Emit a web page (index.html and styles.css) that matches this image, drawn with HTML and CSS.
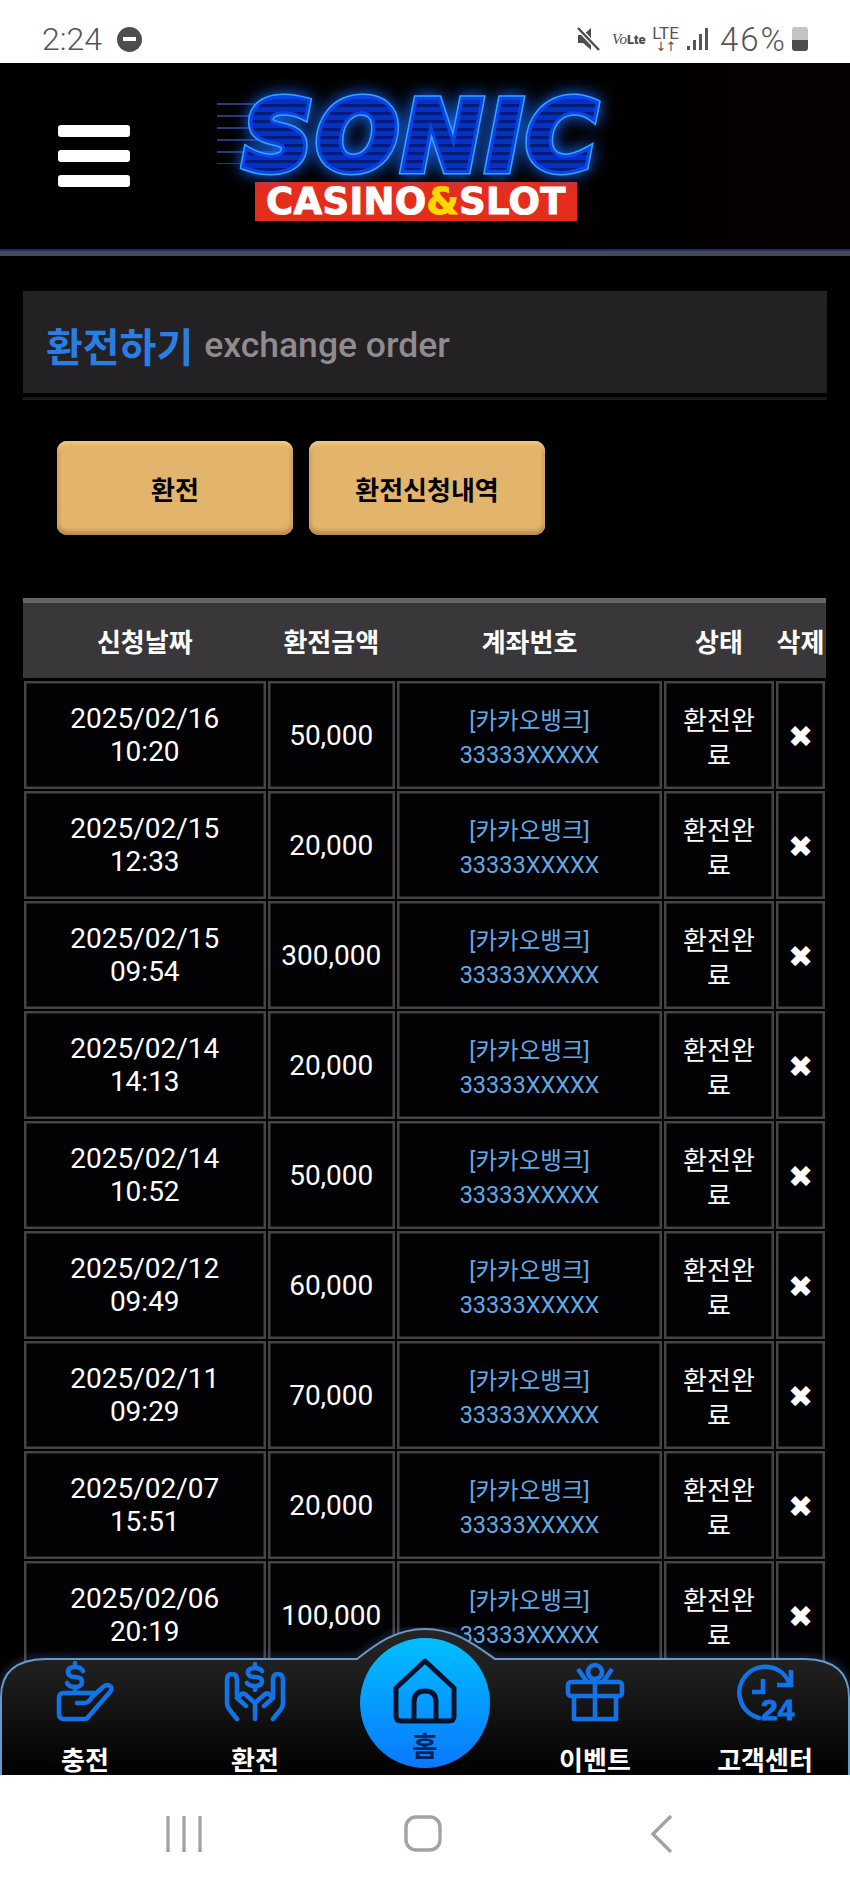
FILE: index.html

```html
<!DOCTYPE html>
<html lang="ko">
<head>
    <meta charset="UTF-8">
    <meta name="viewport" content="width=device-width, initial-scale=1.0">
    <title>환전하기</title>
    <link rel="stylesheet" href="styles.css">
</head>
<body>
<div class="page">
    <div class="status-bar">
        <div class="status-left">
            <span class="clock">2:24</span>
            <span class="dnd"><span></span></span>
        </div>
        <div class="status-right">
            <svg class="mute" width="24" height="24" viewBox="0 0 24 24">
                <path d="M2 8h5l8-7v22l-8-7H2z" fill="#4d4d4d"/>
                <path d="M2 1l21 22" stroke="#fff" stroke-width="5"/>
                <path d="M2 1l21 22" stroke="#4d4d4d" stroke-width="2.4"/>
            </svg>
            <span class="volte"><i>Vo</i><b>Lte</b></span>
            <span class="lte">LTE<small>↓↑</small></span>
            <svg class="signal" width="22" height="24" viewBox="0 0 22 24">
                <rect x="0" y="19" width="3" height="4" fill="#555"/>
                <rect x="6" y="13" width="3" height="10" fill="#555"/>
                <rect x="12" y="7" width="3" height="16" fill="#555"/>
                <rect x="18" y="1" width="3" height="22" fill="#555"/>
            </svg>
            <span class="percent">46%</span>
            <span class="battery"></span>
        </div>
    </div>

    <header class="top">
        <div class="burger"><span></span><span></span><span></span></div>
        <div class="logo">
            <div class="speed"></div>
            <div class="sonic">SONIC</div>
            <div class="casino">CASINO<em>&amp;</em>SLOT</div>
        </div>
    </header>

    <main class="main">
        <div class="title-box">
            <h2>환전하기</h2>
            <span>exchange order</span>
        </div>
        <div class="title-line"></div>
        <div class="tabs">
            <a href="#" class="tab">환전</a>
            <a href="#" class="tab">환전신청내역</a>
        </div>
        <table class="list">
            <colgroup>
                <col class="c-date"><col class="c-money"><col class="c-bank"><col class="c-state"><col class="c-del">
            </colgroup>
            <thead>
                <tr><th>신청날짜</th><th>환전금액</th><th>계좌번호</th><th>상태</th><th>삭제</th></tr>
            </thead>
            <tbody>
                <tr><td>2025/02/16<br>10:20</td><td>50,000</td><td class="bank">[카카오뱅크]<br>33333XXXXX</td><td class="state">환전완료</td><td class="del">✖</td></tr>
                <tr><td>2025/02/15<br>12:33</td><td>20,000</td><td class="bank">[카카오뱅크]<br>33333XXXXX</td><td class="state">환전완료</td><td class="del">✖</td></tr>
                <tr><td>2025/02/15<br>09:54</td><td>300,000</td><td class="bank">[카카오뱅크]<br>33333XXXXX</td><td class="state">환전완료</td><td class="del">✖</td></tr>
                <tr><td>2025/02/14<br>14:13</td><td>20,000</td><td class="bank">[카카오뱅크]<br>33333XXXXX</td><td class="state">환전완료</td><td class="del">✖</td></tr>
                <tr><td>2025/02/14<br>10:52</td><td>50,000</td><td class="bank">[카카오뱅크]<br>33333XXXXX</td><td class="state">환전완료</td><td class="del">✖</td></tr>
                <tr><td>2025/02/12<br>09:49</td><td>60,000</td><td class="bank">[카카오뱅크]<br>33333XXXXX</td><td class="state">환전완료</td><td class="del">✖</td></tr>
                <tr><td>2025/02/11<br>09:29</td><td>70,000</td><td class="bank">[카카오뱅크]<br>33333XXXXX</td><td class="state">환전완료</td><td class="del">✖</td></tr>
                <tr><td>2025/02/07<br>15:51</td><td>20,000</td><td class="bank">[카카오뱅크]<br>33333XXXXX</td><td class="state">환전완료</td><td class="del">✖</td></tr>
                <tr><td>2025/02/06<br>20:19</td><td>100,000</td><td class="bank">[카카오뱅크]<br>33333XXXXX</td><td class="state">환전완료</td><td class="del">✖</td></tr>
            </tbody>
        </table>
    </main>

    <div class="sys-bar">
        <svg width="36" height="36" viewBox="0 0 36 36"><path d="M2 0v36M18 0v36M34 0v36" stroke="#a3a3a3" stroke-width="3.4"/></svg>
        <svg width="38" height="37" viewBox="0 0 38 37"><rect x="2" y="2" width="34" height="33" rx="10" fill="none" stroke="#a3a3a3" stroke-width="3.4"/></svg>
        <svg width="22" height="38" viewBox="0 0 22 38"><path d="M20 1L2 19l18 18" fill="none" stroke="#a3a3a3" stroke-width="3.4"/></svg>
    </div>

    <nav class="bottom-nav">
        <svg class="nav-bg" width="850" height="148" viewBox="0 0 850 148">
            <defs>
                <linearGradient id="navFill" x1="0" y1="0" x2="0" y2="1">
                    <stop offset="0" stop-color="#262626"/>
                    <stop offset="0.35" stop-color="#1c1c1c"/>
                    <stop offset="1" stop-color="#000"/>
                </linearGradient>
                <filter id="navGlow" x="-5%" y="-20%" width="110%" height="140%">
                    <feGaussianBlur stdDeviation="4"/>
                </filter>
            </defs>
            <path d="M1 148V70Q1 33 45 32H357C375 18 395 2 425 2S475 18 495 32H805Q849 33 849 70V148" fill="none" stroke="#4f86c6" stroke-width="4" opacity=".5" filter="url(#navGlow)"/>
            <path d="M1 148V70Q1 33 45 32H357C375 18 395 2 425 2S475 18 495 32H805Q849 33 849 70V148Z" fill="url(#navFill)"/>
            <path d="M1 148V70Q1 33 45 32H357C375 18 395 2 425 2S475 18 495 32H805Q849 33 849 70V148" fill="none" stroke="#6c97c6" stroke-width="2"/>
        </svg>
        <a href="#" class="nav-item">
            <svg width="90" height="70" viewBox="0 0 90 70" fill="none" stroke="#1173e6" stroke-width="4.6" stroke-linecap="round" stroke-linejoin="round">
                <path d="M43 14Q41 10 35 10Q28 10 28 15Q28 20 35 20Q42 20 42 25Q42 30 35 30Q29 30 27 26M35 6V10M35 30V36"/>
                <path d="M55 36H24Q19 36 19 41V57Q19 62 24 62H45Q47 62 49 59L70 35Q73 31 70 29Q67 27 63 30L52 40Q49 46 44 46H37"/>
            </svg>
            <span>충전</span>
        </a>
        <a href="#" class="nav-item">
            <svg width="90" height="70" viewBox="0 0 90 70" fill="none" stroke="#1173e6" stroke-width="4.6" stroke-linecap="round" stroke-linejoin="round">
                <path d="M52 14Q50 11 45 11Q38 11 38 15.500Q38 20 45 20Q52 20 52 24.500Q52 29 45 29Q39 29 37 26M45 7V11M45 29V33"/>
                <path d="M27 62L19 52Q17 49 17 46V23Q17 17 22 17Q27 17 27 23V38M63 38V23Q63 17 68 17Q73 17 73 23V46Q73 49 71 52L63 62"/>
                <path d="M45 62V46L36 38Q33 35 30 38L27 41L36 49M45 46L54 38Q57 35 60 38L63 41L54 49"/>
            </svg>
            <span>환전</span>
        </a>
        <a href="#" class="nav-home">
            <svg width="64" height="66" viewBox="0 0 64 66" fill="none" stroke="#04122a" stroke-width="5" stroke-linecap="round" stroke-linejoin="round">
                <path d="M32 3L3 30V58Q3 63 8 63H56Q61 63 61 58V30Z"/>
                <path d="M21 62V44Q21 33 32 33Q43 33 43 44V62"/>
            </svg>
            <span>홈</span>
        </a>
        <a href="#" class="nav-item">
            <svg width="90" height="70" viewBox="0 0 90 70" fill="none" stroke="#1173e6" stroke-width="4.6" stroke-linejoin="round">
                <rect x="18" y="25" width="54" height="14" rx="3"/>
                <path d="M24 39V62H66V39M45 25V62"/>
                <circle cx="45" cy="15" r="7"/>
                <path d="M28 12L37 25M62 12L53 25"/>
            </svg>
            <span>이벤트</span>
        </a>
        <a href="#" class="nav-item">
            <svg width="90" height="70" viewBox="-5 0 90 70" fill="none" stroke="#1173e6" stroke-width="4.6">
                <path d="M34 61A26 26 0 1 1 64 25" stroke-linecap="round"/>
                <path d="M66 13V28H52M38 22V35H27"/>
                <text class="twenty-four" x="36" y="63">24</text>
            </svg>
            <span>고객센터</span>
        </a>
    </nav>
</div>
</body>
</html>
```

FILE: styles.css

```css
* {
    box-sizing: border-box;
}
body {
    margin: 0;
    background-color: #000;
    font-family: Roboto, "Noto Sans CJK KR", sans-serif;
    color: #fff;
}
a {
    text-decoration: none;
    color: inherit;
}
.page {
    position: relative;
    width: 850px;
    height: 1889px;
    display: flex;
    flex-direction: column;
    overflow: hidden;
}

/* phone status bar */
.status-bar {
    height: 63px;
    flex: none;
    background-color: #fff;
    color: #555;
    display: flex;
    justify-content: space-between;
    align-items: center;
    padding: 15px 42px 0 42px;
}
.status-left, .status-right {
    display: flex;
    align-items: center;
}
.clock {
    font-size: 32px;
    font-weight: 300;
}
.dnd {
    width: 25px;
    height: 25px;
    margin-left: 15px;
    border-radius: 50%;
    background-color: #4d4d4d;
    display: flex;
    align-items: center;
    justify-content: center;
}
.dnd span {
    width: 13px;
    height: 4px;
    background-color: #fff;
}
.mute {
    margin-right: 12px;
}
.volte {
    width: 38px;
    font-size: 13px;
    color: #4d4d4d;
    margin-right: 2px;
}
.volte i {
    font-family: "Liberation Serif", serif;
    font-size: 15px;
}
.volte b {
    font-weight: 900;
}
.lte {
    width: 27px;
    font-size: 17px;
    line-height: 15px;
    text-align: center;
    display: flex;
    flex-direction: column;
    margin-right: 8px;
}
.lte small {
    font-family: "DejaVu Sans", sans-serif;
    font-size: 13px;
    line-height: 11px;
    white-space: nowrap;
    letter-spacing: -1px;
}
.percent {
    font-size: 33px;
    font-weight: 300;
    margin-left: 11px;
    letter-spacing: 2px;
}
.battery {
    width: 16px;
    height: 24px;
    margin-left: 5px;
    border-radius: 3px;
    background: linear-gradient(#c4c4c4 56%, #4d4d4d 56%);
}

/* site header */
.top {
    height: 193px;
    flex: none;
    padding-left: 58px;
    background: linear-gradient(90deg, #000 60%, #070001);
    border-bottom: 5px solid #474a55;
    box-shadow: inset 0 -2px 0 #1b2f75;
    display: flex;
    align-items: flex-start;
}
.burger {
    width: 72px;
    margin-top: 62px;
    display: flex;
    flex-direction: column;
    gap: 13px;
}
.burger span {
    height: 12px;
    border-radius: 3px;
    background-color: #fff;
}
.logo {
    position: relative;
    width: 370px;
    margin: 36px 0 0 101px;
    display: flex;
    flex-direction: column;
    align-items: center;
}
.speed {
    position: absolute;
    left: -14px;
    top: 4px;
    width: 60px;
    height: 72px;
    background: repeating-linear-gradient(#3a4fa8 0 1.500px, transparent 1.500px 12px);
    opacity: .7;
}
/* three stacked copies of the word: bright rim, blue body, dark striped core */
.sonic, .sonic::before, .sonic::after {
    font-family: "DejaVu Sans", sans-serif;
    font-size: 96px;
    font-weight: 700;
    font-style: italic;
    line-height: 76px;
    letter-spacing: 4px;
}
.sonic {
    position: relative;
    margin-left: 12px;
    color: #35a5ff;
    -webkit-text-stroke: 9px #35a5ff;
    filter: drop-shadow(0 0 8px #1668ff);
}
.sonic::before, .sonic::after {
    content: "SONIC";
    position: absolute;
    left: 0;
    top: 0;
}
.sonic::before {
    color: #0b44e6;
    -webkit-text-stroke: 6px #0b44e6;
}
.sonic::after {
    color: transparent;
    -webkit-text-stroke: 0;
    background: repeating-linear-gradient(#0530c4 0 5px, #031c7c 5px 8px);
    -webkit-background-clip: text;
    background-clip: text;
}
.casino {
    width: 322px;
    height: 39px;
    margin-top: 7px;
    background-color: #e52d1c;
    font-family: "DejaVu Sans", sans-serif;
    font-size: 37px;
    font-weight: 700;
    line-height: 39px;
    letter-spacing: 0.3px;
    text-align: center;
    white-space: nowrap;
    -webkit-text-stroke: 1px #fff;
}
.casino em {
    font-style: normal;
    color: #ffd800;
    -webkit-text-stroke: 1px #ffd800;
}

/* content */
.main {
    flex: 1;
    min-height: 0;
    overflow: hidden;
    padding: 35px 23px 0;
}
.title-box {
    height: 102px;
    padding: 6px 0 0 23px;
    background-color: #232123;
    display: flex;
    align-items: center;
    gap: 11px;
}
.title-box h2 {
    margin: 0;
    font-size: 40px;
    font-weight: 700;
    color: #2a7de1;
}
.title-box span {
    font-size: 35.500px;
    font-weight: 500;
    color: #8f8b8f;
}
.title-line {
    height: 3px;
    margin-top: 4px;
    background-color: #1a1a1a;
}
.tabs {
    display: flex;
    gap: 16px;
    margin: 41px 0 0 34px;
}
.tab {
    width: 236px;
    height: 94px;
    border-radius: 10px;
    background-color: #e3b56c;
    box-shadow: inset 0 3px 3px #eec98c, inset 0 -4px 4px #b98c4c, inset 2px 0 3px #c79a58, inset -2px 0 3px #c79a58;
    color: #000;
    font-size: 26px;
    font-weight: 700;
    display: flex;
    align-items: center;
    justify-content: center;
}
.list {
    width: 803px;
    margin-top: 63px;
    border-collapse: separate;
    border-spacing: 0;
    table-layout: fixed;
}
.c-date { width: 243.500px; }
.c-money { width: 129.500px; }
.c-bank { width: 267px; }
.c-state { width: 112px; }
.c-del { width: 51px; }
.list th {
    height: 82px;
    padding: 0;
    background-color: #3a373a;
    border-top: 5px solid #666;
    border-bottom: 2px solid #000;
    font-size: 26px;
    font-weight: 700;
    white-space: nowrap;
}
.list td {
    height: 110px;
    padding: 0 10px;
    border: 1px solid #000;
    box-shadow: inset 0 0 0 2.500px #454345;
    background-color: #020103;
    text-align: center;
    font-size: 26px;
    line-height: 33px;
}
.list td:first-child, .list td:nth-child(2) {
    font-size: 28px;
}
.list td:nth-child(2) {
    padding: 0;
}
.list td.bank {
    padding-top: 5px;
    font-size: 23.500px;
    line-height: 34px;
    color: #62a8e4;
}
.list td.state {
    padding-top: 7px;
    line-height: 35px;
}
.list td.del {
    padding: 3px 0 0;
    font-family: "DejaVu Sans", sans-serif;
    font-size: 30px;
}

/* app bottom menu, sits on top of the table */
.bottom-nav {
    position: absolute;
    left: 0;
    bottom: 114px;
    width: 850px;
    height: 148px;
    display: grid;
    grid-template-columns: repeat(5, 170px);
    overflow: hidden;
}
.nav-bg {
    position: absolute;
    left: 0;
    top: 0;
}
.nav-item {
    position: relative;
    padding-top: 30px;
    display: flex;
    flex-direction: column;
    align-items: center;
}
.nav-item span {
    margin-top: 16px;
    font-size: 26px;
    line-height: 36px;
    font-weight: 700;
    white-space: nowrap;
}
.twenty-four {
    font-family: "Liberation Sans", sans-serif;
    font-size: 30px;
    font-weight: 700;
    fill: #1173e6;
    stroke: #1173e6;
    stroke-width: 1px;
}
.nav-home {
    position: relative;
    width: 130px;
    height: 130px;
    margin: 11px 0 0 20px;
    padding-top: 20px;
    border-radius: 50%;
    background: linear-gradient(#00bfff, #0a78ff);
    display: flex;
    flex-direction: column;
    align-items: center;
}
.nav-home span {
    margin-top: 9px;
    font-size: 28px;
    line-height: 30px;
    font-weight: 700;
    color: #06245a;
}

/* phone navigation bar */
.sys-bar {
    height: 114px;
    flex: none;
    background-color: #fff;
    padding: 3px 0 0 64px;
    display: grid;
    grid-template-columns: repeat(3, 239px);
    justify-items: center;
    align-items: center;
    position: relative;
}
```
